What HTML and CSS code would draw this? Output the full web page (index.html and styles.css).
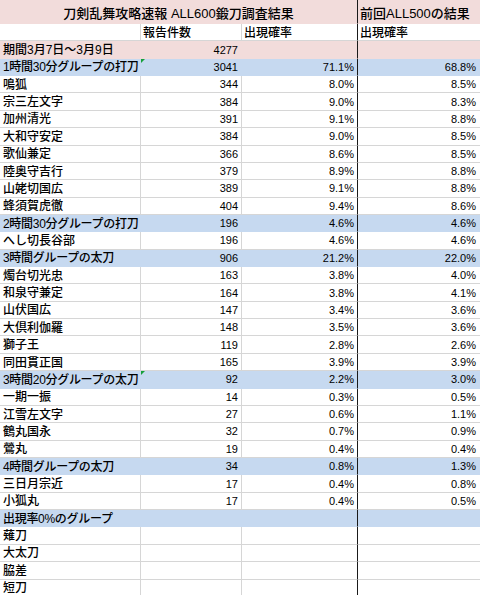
FILE: index.html
```html
<!DOCTYPE html>
<html lang="ja">
<head>
<meta charset="utf-8">
<title>刀剣乱舞攻略速報 ALL600鍛刀調査結果</title>
<link rel="stylesheet" href="styles.css">
</head>
<body>
<div class="sheet">
  <div class="row title-row fill-pink">
    <div class="cell span3 title">刀剣乱舞攻略速報 ALL600鍛刀調査結果</div>
    <div class="cell title-prev">前回ALL500の結果</div>
  </div>
  <div class="row head-row">
    <div class="cell"></div>
    <div class="cell">報告件数</div>
    <div class="cell sep">出現確率</div>
    <div class="cell">出現確率</div>
  </div>
  <div class="row fill-pink">
    <div class="cell">期間3月7日～3月9日</div>
    <div class="cell num">4277</div>
    <div class="cell sep"></div>
    <div class="cell"></div>
  </div>

  <div class="row fill-blue">
    <div class="cell">1時間30分グループの打刀</div>
    <div class="cell num flag">3041</div>
    <div class="cell num sep">71.1%</div>
    <div class="cell num">68.8%</div>
  </div>
  <div class="row"><div class="cell">鳴狐</div><div class="cell num">344</div><div class="cell num sep">8.0%</div><div class="cell num">8.5%</div></div>
  <div class="row"><div class="cell">宗三左文字</div><div class="cell num">384</div><div class="cell num sep">9.0%</div><div class="cell num">8.3%</div></div>
  <div class="row"><div class="cell">加州清光</div><div class="cell num">391</div><div class="cell num sep">9.1%</div><div class="cell num">8.8%</div></div>
  <div class="row"><div class="cell">大和守安定</div><div class="cell num">384</div><div class="cell num sep">9.0%</div><div class="cell num">8.5%</div></div>
  <div class="row"><div class="cell">歌仙兼定</div><div class="cell num">366</div><div class="cell num sep">8.6%</div><div class="cell num">8.5%</div></div>
  <div class="row"><div class="cell">陸奥守吉行</div><div class="cell num">379</div><div class="cell num sep">8.9%</div><div class="cell num">8.8%</div></div>
  <div class="row"><div class="cell">山姥切国広</div><div class="cell num">389</div><div class="cell num sep">9.1%</div><div class="cell num">8.8%</div></div>
  <div class="row"><div class="cell">蜂須賀虎徹</div><div class="cell num">404</div><div class="cell num sep">9.4%</div><div class="cell num">8.6%</div></div>

  <div class="row fill-blue">
    <div class="cell">2時間30分グループの打刀</div>
    <div class="cell num">196</div>
    <div class="cell num sep">4.6%</div>
    <div class="cell num">4.6%</div>
  </div>
  <div class="row"><div class="cell">へし切長谷部</div><div class="cell num">196</div><div class="cell num sep">4.6%</div><div class="cell num">4.6%</div></div>

  <div class="row fill-blue">
    <div class="cell">3時間グループの太刀</div>
    <div class="cell num">906</div>
    <div class="cell num sep">21.2%</div>
    <div class="cell num">22.0%</div>
  </div>
  <div class="row"><div class="cell">燭台切光忠</div><div class="cell num">163</div><div class="cell num sep">3.8%</div><div class="cell num">4.0%</div></div>
  <div class="row"><div class="cell">和泉守兼定</div><div class="cell num">164</div><div class="cell num sep">3.8%</div><div class="cell num">4.1%</div></div>
  <div class="row"><div class="cell">山伏国広</div><div class="cell num">147</div><div class="cell num sep">3.4%</div><div class="cell num">3.6%</div></div>
  <div class="row"><div class="cell">大倶利伽羅</div><div class="cell num">148</div><div class="cell num sep">3.5%</div><div class="cell num">3.6%</div></div>
  <div class="row"><div class="cell">獅子王</div><div class="cell num">119</div><div class="cell num sep">2.8%</div><div class="cell num">2.6%</div></div>
  <div class="row"><div class="cell">同田貫正国</div><div class="cell num">165</div><div class="cell num sep">3.9%</div><div class="cell num">3.9%</div></div>

  <div class="row fill-blue">
    <div class="cell">3時間20分グループの太刀</div>
    <div class="cell num flag">92</div>
    <div class="cell num sep">2.2%</div>
    <div class="cell num">3.0%</div>
  </div>
  <div class="row"><div class="cell">一期一振</div><div class="cell num">14</div><div class="cell num sep">0.3%</div><div class="cell num">0.5%</div></div>
  <div class="row"><div class="cell">江雪左文字</div><div class="cell num">27</div><div class="cell num sep">0.6%</div><div class="cell num">1.1%</div></div>
  <div class="row"><div class="cell">鶴丸国永</div><div class="cell num">32</div><div class="cell num sep">0.7%</div><div class="cell num">0.9%</div></div>
  <div class="row"><div class="cell">鶯丸</div><div class="cell num">19</div><div class="cell num sep">0.4%</div><div class="cell num">0.4%</div></div>

  <div class="row fill-blue">
    <div class="cell">4時間グループの太刀</div>
    <div class="cell num">34</div>
    <div class="cell num sep">0.8%</div>
    <div class="cell num">1.3%</div>
  </div>
  <div class="row"><div class="cell">三日月宗近</div><div class="cell num">17</div><div class="cell num sep">0.4%</div><div class="cell num">0.8%</div></div>
  <div class="row"><div class="cell">小狐丸</div><div class="cell num">17</div><div class="cell num sep">0.4%</div><div class="cell num">0.5%</div></div>

  <div class="row fill-blue">
    <div class="cell">出現率0%のグループ</div>
    <div class="cell"></div>
    <div class="cell sep"></div>
    <div class="cell"></div>
  </div>
  <div class="row"><div class="cell">薙刀</div><div class="cell"></div><div class="cell sep"></div><div class="cell"></div></div>
  <div class="row"><div class="cell">大太刀</div><div class="cell"></div><div class="cell sep"></div><div class="cell"></div></div>
  <div class="row"><div class="cell">脇差</div><div class="cell"></div><div class="cell sep"></div><div class="cell"></div></div>
  <div class="row"><div class="cell">短刀</div><div class="cell"></div><div class="cell sep"></div><div class="cell"></div></div>
</div>
</body>
</html>
```

FILE: styles.css
```css
html, body {
  margin: 0;
  padding: 0;
  background: #ffffff;
}
body {
  width: 480px;
  height: 595px;
  overflow: hidden;
  font-family: "Liberation Sans", "Noto Sans CJK JP", sans-serif;
  font-size: 12px;
  font-weight: 500;
  color: #000000;
}
.sheet {
  display: flex;
  flex-direction: column;
  width: 480px;
}
.row {
  display: grid;
  grid-template-columns: 141px 101px 116px 122px;
  height: 17.36px;
  flex: none;
}
.cell {
  box-sizing: border-box;
  display: flex;
  align-items: center;
  padding: 1px 3px 0 3px;
  white-space: nowrap;
  border-right: 1px solid #d6d6d6;
  border-bottom: 1px solid #d6d6d6;
  line-height: 1;
  position: relative;
}
.cell.num {
  justify-content: flex-end;
  font-size: 11px;
  padding-right: 3px;
}
.cell.sep {
  border-right: 1px solid #1a1a1a;
}
.row .cell:last-child {
  border-right: none;
  padding-right: 4px;
}
.fill-pink { background: #f2dcdb; }
.fill-blue { background: #c6d9f0; }
.fill-pink .cell,
.fill-blue .cell {
  border-color: transparent;
}
.fill-blue .cell:first-child {
  letter-spacing: -0.3px;
}
.fill-pink .cell.sep,
.fill-blue .cell.sep,
.title-row .span3 {
  border-right: 1px solid #1a1a1a;
}
.title-row {
  height: 24px;
}
.span3 {
  grid-column: span 3;
}
.title {
  justify-content: center;
  font-size: 13px;
  padding-top: 3px;
}
.title-prev {
  font-size: 13px;
  padding-top: 3px;
  padding-left: 2px;
}
.head-row .cell {
  padding-left: 2px;
}
.flag::before {
  content: "";
  position: absolute;
  left: 0;
  top: 0;
  width: 0;
  height: 0;
  border-top: 4px solid #16a03a;
  border-right: 4px solid transparent;
}
```
